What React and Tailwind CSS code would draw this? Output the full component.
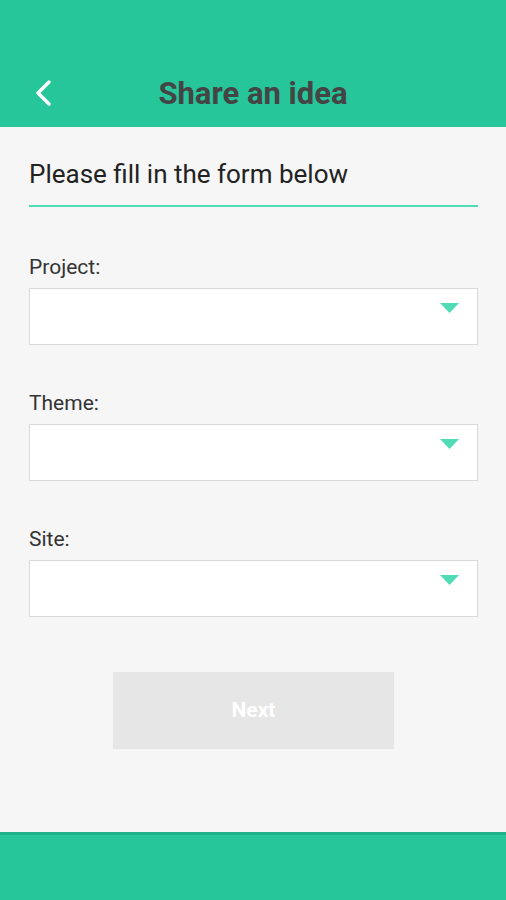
import React from "react";

function Select({ label }) {
  return (
    <div className="flex flex-col">
      <label className="text-[21px] leading-[24px] text-[#333]">{label}</label>
      <div className="mt-[9px] h-[57px] bg-white border border-[#d9d9d9] flex items-center justify-end pr-[18px]">
        <svg width="19" height="11" viewBox="0 0 19 11" className="-mt-[16px]">
          <path d="M0 0 H19 L9.5 10 Z" fill="#4fdcb5" />
        </svg>
      </div>
    </div>
  );
}

export default function App() {
  return (
    <div className="w-[506px] h-[900px] flex flex-col bg-[#f6f6f6]" style={{ fontFamily: "Roboto, 'Liberation Sans', sans-serif" }}>
      <div className="h-[127px] bg-[#26c59a] flex items-end pb-[16px] relative">
        <button className="absolute left-[33px] bottom-[20px]">
          <svg width="20" height="28" viewBox="0 0 20 28" fill="none">
            <path d="M16 3 L5 14 L16 25" stroke="white" strokeWidth="3.5" strokeLinecap="round" strokeLinejoin="round" />
          </svg>
        </button>
        <h1 className="w-full text-center text-[31px] font-bold text-[#444] leading-[34px]">Share an idea</h1>
      </div>

      <div className="flex-1 px-[29px] pt-[32px] flex flex-col">
        <div className="text-[26px] leading-[30px] text-[#222] pb-[16px] border-b-2 border-[#4fdcb5] w-[449px]">Please fill in the form below</div>
        <div className="mt-[48px] flex flex-col gap-[46px] w-[449px]">
          <Select label="Project:" />
          <Select label="Theme:" />
          <Select label="Site:" />
        </div>
        <div className="flex justify-center mt-[55px]">
          <button className="w-[281px] h-[77px] bg-[#e6e6e6] text-white font-bold text-[21px] ml-[1px]">Next</button>
        </div>
      </div>

      <div className="h-[68px] bg-[#26c59a] border-t-[3px] border-[#1fb08a]"></div>
    </div>
  );
}
